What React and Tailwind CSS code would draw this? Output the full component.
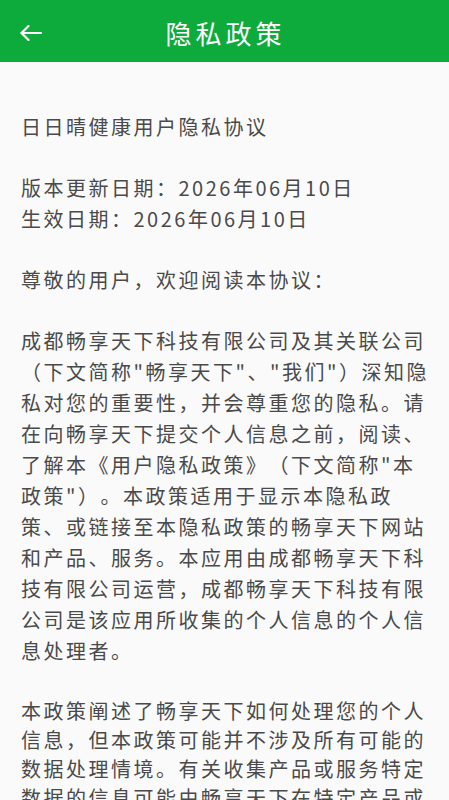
export default function App() {
  const font = { fontFamily: '"Noto Sans CJK SC", "Noto Sans", sans-serif' };
  return (
    <div className="w-[449px] h-[800px] overflow-hidden bg-[#fafafa]" style={font}>
      <div className="h-[62px] bg-[#0cab3c] flex items-center relative">
        <div className="absolute left-[20px] top-[25px]">
          <svg width="22" height="16" viewBox="0 0 22 16" fill="none" stroke="white" strokeWidth="2.2" strokeLinecap="round" strokeLinejoin="round">
            <path d="M21 8H1.5" />
            <path d="M8.5 1L1.5 8L8.5 15" />
          </svg>
        </div>
        <div className="flex-1 text-center text-white text-[26px] tracking-[4px] pl-[2px] mt-[4px] leading-none">隐私政策</div>
      </div>
      <div className="pl-[21px] pr-[12px] pt-[49px] text-[20px] leading-[31px] tracking-[2.5px] text-[#4a4a4a] [text-spacing-trim:space-all]">
        <p>日日晴健康用户隐私协议</p>
        <p className="mt-[30px]">版本更新日期：2026年06月10日</p>
        <p>生效日期：2026年06月10日</p>
        <p className="mt-[30px]">尊敬的用户，欢迎阅读本协议：</p>
        <p className="mt-[30px]">
          成都畅享天下科技有限公司及其关联公司（下文简称"畅享天下"、"我们"）深知隐私对您的重要性，并会尊重您的隐私。请在向畅享天下提交个人信息之前，阅读、了解本《用户隐私政策》（下文简称"本政策"）。本政策适用于显示本隐私政策、或链接至本隐私政策的畅享天下网站和产品、服务。本应用由成都畅享天下科技有限公司运营，成都畅享天下科技有限公司是该应用所收集的个人信息的个人信息处理者。
        </p>
        <p className="mt-[30px] leading-[29px]">
          本政策阐述了畅享天下如何处理您的个人信息，但本政策可能并不涉及所有可能的数据处理情境。有关收集产品或服务特定数据的信息可能由畅享天下在特定产品或服务的补充政策中，或在收集数据时提供的通知中发布。
        </p>
      </div>
    </div>
  );
}
